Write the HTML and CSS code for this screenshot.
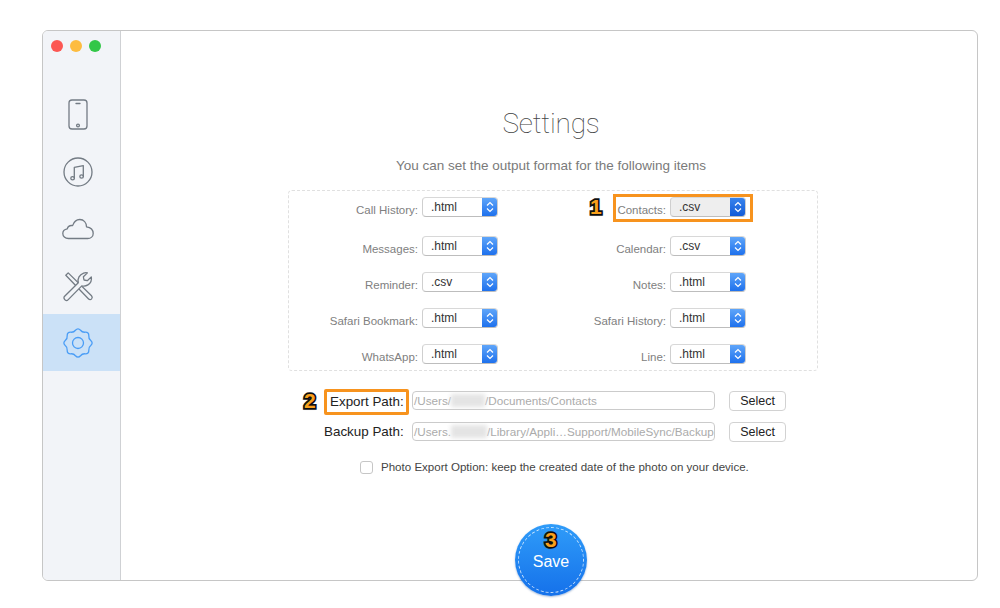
FILE: index.html
```html
<!DOCTYPE html>
<html lang="en">
<head>
<meta charset="utf-8">
<title>Settings</title>
<link rel="stylesheet" href="styles.css">
</head>
<body>
<div class="window">
  <aside class="sidebar">
    <div class="lights"><span class="light red"></span><span class="light yellow"></span><span class="light green"></span></div>
    <nav class="nav">
      <div class="nav-item">
        <svg class="icon" width="40" height="40" viewBox="0 0 40 40"><rect x="11" y="5" width="18" height="29" rx="3"/><path d="M18 8.5h4"/><circle cx="20" cy="30.5" r="1.4"/></svg>
      </div>
      <div class="nav-item">
        <svg class="icon" width="40" height="40" viewBox="0 0 40 40"><circle cx="20" cy="20" r="14"/><path d="M16.3 26V15.3L25.3 13.6V24.3"/><ellipse cx="14.6" cy="26.2" rx="1.8" ry="1.6"/><ellipse cx="23.6" cy="24.5" rx="1.8" ry="1.6"/></svg>
      </div>
      <div class="nav-item">
        <svg class="icon" width="40" height="40" viewBox="0 0 40 40"><path d="M10.5 29.5C7 29.5 4.8 27.3 4.8 24.6C4.8 22 6.8 20.2 9.3 19.8C10 17.4 12.2 16.2 14.6 16.6C16 12.4 18.8 10.5 21.8 10.5C25.8 10.5 28.4 13.6 28.5 17.8C32.4 18.3 35.2 20.8 35.2 24.4C35.2 27.5 32.8 29.5 29.6 29.5Z"/></svg>
      </div>
      <div class="nav-item">
        <svg class="icon" width="40" height="40" viewBox="0 0 40 40"><path d="M7.8 9.2L10.2 6.9L33.5 29.8C34.6 31 34.4 32 33.6 32.9C32.7 33.8 31.5 33.9 30.6 33L7.8 9.2Z"/><path class="cover" d="M6.4 30.5L20.3 16.7C19.3 12.6 21.4 8.6 25.6 7.1C27 6.6 28.3 6.6 29.4 6.9L25.4 10.8L26 14L29.3 14.7L33.3 10.9C33.9 14.1 32.6 17.2 29.9 18.9C28 20.1 25.8 20.4 23.8 19.9L10 33.9C9.2 34.7 8.1 34.7 7.2 34C6 33 5.5 31.5 6.4 30.5Z"/></svg>
      </div>
      <div class="nav-item active">
        <svg class="icon gear" width="40" height="40" viewBox="0 0 40 40"><path transform="translate(20 20)" d="M12.75 -2.54Q15.5 0 12.75 2.54Q10.44 4.32 10.81 7.22Q10.96 10.96 7.22 10.81Q4.32 10.44 2.54 12.75Q0 15.5 -2.54 12.75Q-4.32 10.44 -7.22 10.81Q-10.96 10.96 -10.81 7.22Q-10.44 4.32 -12.75 2.54Q-15.5 0 -12.75 -2.54Q-10.44 -4.32 -10.81 -7.22Q-10.96 -10.96 -7.22 -10.81Q-4.32 -10.44 -2.54 -12.75Q0 -15.5 2.54 -12.75Q4.32 -10.44 7.22 -10.81Q10.96 -10.96 10.81 -7.22Q10.44 -4.32 12.75 -2.54Z"/><circle cx="20" cy="20" r="5.5"/></svg>
      </div>
    </nav>
  </aside>
  <main class="main">
    <div class="content">
      <h1 class="title">Settings</h1>
      <p class="subtitle">You can set the output format for the following items</p>
      <section class="formats">
        <div class="field left"><span class="field-label">Call History:</span><div class="select"><span class="select-value">.html</span><span class="stepper"><svg width="8" height="12" viewBox="0 0 8 12"><path d="M1 4.5L4 1.5L7 4.5M1 7.5L4 10.5L7 7.5"/></svg></span></div></div>
        <div class="field right highlighted"><span class="badge badge-one">1</span><span class="field-label">Contacts:</span><div class="select pressed"><span class="select-value">.csv</span><span class="stepper"><svg width="8" height="12" viewBox="0 0 8 12"><path d="M1 4.5L4 1.5L7 4.5M1 7.5L4 10.5L7 7.5"/></svg></span></div></div>
        <div class="field left"><span class="field-label">Messages:</span><div class="select"><span class="select-value">.html</span><span class="stepper"><svg width="8" height="12" viewBox="0 0 8 12"><path d="M1 4.5L4 1.5L7 4.5M1 7.5L4 10.5L7 7.5"/></svg></span></div></div>
        <div class="field right"><span class="field-label">Calendar:</span><div class="select"><span class="select-value">.csv</span><span class="stepper"><svg width="8" height="12" viewBox="0 0 8 12"><path d="M1 4.5L4 1.5L7 4.5M1 7.5L4 10.5L7 7.5"/></svg></span></div></div>
        <div class="field left"><span class="field-label">Reminder:</span><div class="select"><span class="select-value">.csv</span><span class="stepper"><svg width="8" height="12" viewBox="0 0 8 12"><path d="M1 4.5L4 1.5L7 4.5M1 7.5L4 10.5L7 7.5"/></svg></span></div></div>
        <div class="field right"><span class="field-label">Notes:</span><div class="select"><span class="select-value">.html</span><span class="stepper"><svg width="8" height="12" viewBox="0 0 8 12"><path d="M1 4.5L4 1.5L7 4.5M1 7.5L4 10.5L7 7.5"/></svg></span></div></div>
        <div class="field left"><span class="field-label">Safari Bookmark:</span><div class="select"><span class="select-value">.html</span><span class="stepper"><svg width="8" height="12" viewBox="0 0 8 12"><path d="M1 4.5L4 1.5L7 4.5M1 7.5L4 10.5L7 7.5"/></svg></span></div></div>
        <div class="field right"><span class="field-label">Safari History:</span><div class="select"><span class="select-value">.html</span><span class="stepper"><svg width="8" height="12" viewBox="0 0 8 12"><path d="M1 4.5L4 1.5L7 4.5M1 7.5L4 10.5L7 7.5"/></svg></span></div></div>
        <div class="field left"><span class="field-label">WhatsApp:</span><div class="select"><span class="select-value">.html</span><span class="stepper"><svg width="8" height="12" viewBox="0 0 8 12"><path d="M1 4.5L4 1.5L7 4.5M1 7.5L4 10.5L7 7.5"/></svg></span></div></div>
        <div class="field right"><span class="field-label">Line:</span><div class="select"><span class="select-value">.html</span><span class="stepper"><svg width="8" height="12" viewBox="0 0 8 12"><path d="M1 4.5L4 1.5L7 4.5M1 7.5L4 10.5L7 7.5"/></svg></span></div></div>
      </section>
      <section class="paths">
        <span class="path-label outlined"><span class="badge badge-two">2</span>Export Path:</span>
        <div class="path-input">/Users/<span class="redact redact-a"></span>/Documents/Contacts</div>
        <button class="select-btn">Select</button>
        <span class="path-label">Backup Path:</span>
        <div class="path-input">/Users.<span class="redact redact-b"></span>/Library/Appli…Support/MobileSync/Backup</div>
        <button class="select-btn">Select</button>
      </section>
      <label class="photo-option"><span class="checkbox"></span>Photo Export Option: keep the created date of the photo on your device.</label>
    </div>
    <div class="save"><span class="badge badge-three">3</span><span class="save-label">Save</span></div>
  </main>
</div>
</body>
</html>
```
FILE: styles.css
```css
*, *::before, *::after { box-sizing: border-box; }
html, body { margin: 0; height: 100%; background: #fff; overflow: hidden; }
body { padding: 30px 22px 0 42px; font-family: "Liberation Sans", Arial, sans-serif; }

.window {
  display: flex;
  height: 551px;
  border: 1px solid #c6c6c6;
  border-radius: 6px;
  background: #fff;
}

.sidebar {
  width: 78px;
  flex: none;
  background: #f2f4f8;
  border-right: 1px solid #cfd1d4;
  border-radius: 5px 0 0 5px;
  padding-top: 9px;
}
.lights { display: flex; gap: 7px; padding-left: 8px; height: 46px; }
.light { width: 12px; height: 12px; border-radius: 50%; }
.red { background: #fc5753; }
.yellow { background: #fdbc40; }
.green { background: #33c748; }

.nav-item { height: 57px; display: flex; align-items: center; justify-content: center; padding-right: 8px; }
.nav-item.active { background: #cbe1f7; }
.icon { fill: none; stroke: #737b84; stroke-width: 1.3; stroke-linejoin: round; stroke-linecap: round; }
.icon .cover { fill: #f2f4f8; }
.gear { stroke: #4a9df6; }

.main { flex: 1; position: relative; }
.content { width: 530px; margin-left: 167px; padding-top: 75px; }
.title {
  margin: 0;
  padding-right: 4px;
  text-align: center;
  font: 100 28px/36px Roboto, sans-serif;
  letter-spacing: -.2px;
  color: #444;
}
.subtitle {
  margin: 15px 0 0;
  padding-right: 4px;
  text-align: center;
  font-size: 13.5px;
  line-height: 18px;
  height: 17px;
  color: #7a7a7a;
}

.formats {
  position: relative;
  margin-top: 16px;
  height: 181px;
  border: 1px dashed #e0e0e0;
  border-radius: 4px;
  padding-top: 6px;
  display: grid;
  grid-template-columns: 210px 180px;
  grid-template-rows: 23px 20px 20px 20px 20px;
  column-gap: 67px;
  row-gap: 16px;
}
.field { position: relative; display: flex; align-items: flex-start; height: 20px; }
.field-label {
  text-align: right;
  font-size: 11.5px;
  line-height: 14px;
  padding-top: 6px;
  color: #808080;
  white-space: nowrap;
}
.left .field-label { width: 129px; margin-right: 4px; }
.right .field-label { width: 100px; margin-right: 4px; }

.select {
  position: relative;
  width: 76px;
  height: 20px;
  display: flex;
  justify-content: space-between;
  background: #fff;
  border: 1px solid #cfcfcf;
  border-top-color: #d8d8d8;
  border-bottom-color: #bdbdbd;
  border-radius: 4px;
  overflow: hidden;
}
.select-value { padding-left: 8px; font-size: 12px; line-height: 18px; color: #333; }
.stepper {
  width: 16px;
  margin: -1px -1px -1px 0;
  display: flex;
  align-items: center;
  justify-content: center;
  background: linear-gradient(#62a8fa, #1b6eec);
}
.stepper path { fill: none; stroke: #fff; stroke-width: 1.2; }
.pressed { background: #eeeeee; }
.pressed .stepper { background: linear-gradient(#3a86ee, #0f58d6); }

.highlighted::after {
  content: "";
  position: absolute;
  left: 47px;
  top: -3px;
  width: 140px;
  height: 28px;
  border: 3px solid #f7931e;
  pointer-events: none;
}

.badge {
  position: absolute;
  font-family: "Liberation Sans", Arial, sans-serif;
  font-weight: 700;
  font-size: 21px;
  line-height: 22px;
  color: #f9a01b;
  -webkit-text-stroke: 3.5px #111;
  paint-order: stroke fill;
  text-shadow: 0 1px 2px rgba(0, 0, 0, .35);
}
.badge-one { left: 24px; top: -1px; }
.badge-two { left: -20px; top: -4px; }
.badge-three { left: 30px; top: 5px; }

.paths {
  margin: 20px 0 0 36px;
  display: grid;
  grid-template-columns: 85px 303px 57px;
  grid-template-rows: 19px 19px;
  column-gap: 3px;
  row-gap: 12px;
  align-items: center;
}
.path-label { position: relative; font-size: 13.4px; line-height: 16px; color: #222; white-space: nowrap; }
.outlined { padding-left: 6px; top: 1px; }
.outlined::after {
  content: "";
  position: absolute;
  left: 0;
  top: -5px;
  width: 85px;
  height: 26px;
  border: 3px solid #f7931e;
  border-radius: 2px;
}
.path-input {
  height: 19px;
  border: 1px solid #cbcbcb;
  border-radius: 4px;
  padding-left: 1px;
  font-size: 11.7px;
  line-height: 17px;
  color: #ababab;
  white-space: nowrap;
  overflow: hidden;
  background: #fff;
}
.redact { display: inline-block; height: 13px; vertical-align: -2px; background: #e4e4e4; filter: blur(2px); }
.redact-a { width: 34px; }
.redact-b { width: 36px; }
.select-btn {
  margin-left: 11px;
  width: 57px;
  height: 20px;
  padding: 0;
  border: 1px solid #d2d2d2;
  border-radius: 4px;
  background: #fff;
  font: 12.5px/18px "Liberation Sans", Arial, sans-serif;
  color: #222;
}

.photo-option {
  display: flex;
  align-items: center;
  margin: 20px 0 0 72px;
  font-size: 11.55px;
  line-height: 13px;
  color: #444;
  white-space: nowrap;
}
.checkbox {
  width: 13px;
  height: 13px;
  margin-right: 8px;
  border: 1px solid #c6c6c6;
  border-radius: 3px;
  background: #fff;
}

.save {
  position: absolute;
  left: 394px;
  top: 493px;
  width: 72px;
  height: 72px;
  border-radius: 50%;
  background: linear-gradient(#2f9cf9, #1571ea);
  box-shadow: 0 1px 2px rgba(0, 60, 140, .35);
  display: flex;
  align-items: center;
  justify-content: center;
}
.save::before {
  content: "";
  position: absolute;
  inset: 3px;
  border: 1px dashed rgba(255, 255, 255, .75);
  border-radius: 50%;
}
.save-label { margin-top: 3px; font-size: 16px; line-height: 18px; color: #fff; }
```
